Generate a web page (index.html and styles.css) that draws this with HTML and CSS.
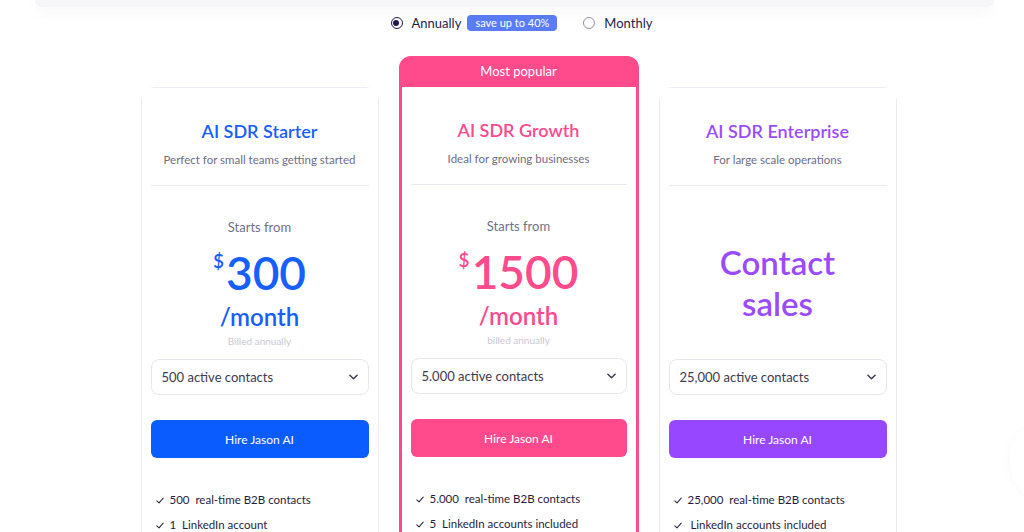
FILE: index.html
```html
<!DOCTYPE html>
<html lang="en">
<head>
<meta charset="utf-8">
<title>Pricing</title>
<link rel="stylesheet" href="styles.css">
</head>
<body>
<div class="page">
  <div class="top-panel"></div>

  <div class="toggle-row">
    <label class="opt">
      <span class="radio checked"></span>
      <span class="opt-label">Annually</span>
      <span class="badge">save up to 40%</span>
    </label>
    <label class="opt">
      <span class="radio"></span>
      <span class="opt-label">Monthly</span>
    </label>
  </div>

  <div class="plans">
    <div class="card starter">
      <div class="card-body">
        <h2 class="title">AI SDR Starter</h2>
        <p class="sub">Perfect for small teams getting started</p>
        <div class="divider"></div>
        <div class="price-area">
          <div class="starts">Starts from</div>
          <div class="amount"><span class="cur">$</span>300</div>
          <div class="per">/month</div>
          <div class="billed">Billed annually</div>
        </div>
        <div class="select"><span>500 active contacts</span><svg class="chev" viewBox="0 0 10 6" width="9" height="6"><polyline points="1,1 5,5 9,1"/></svg></div>
        <button class="cta">Hire Jason AI</button>
        <ul class="features">
          <li><svg class="check" viewBox="0 0 10 8" width="8" height="7"><polyline points="1,4.5 3.8,7 9,1"/></svg>500&nbsp; real-time B2B contacts</li>
          <li><svg class="check" viewBox="0 0 10 8" width="8" height="7"><polyline points="1,4.5 3.8,7 9,1"/></svg>1&nbsp; LinkedIn account</li>
        </ul>
      </div>
    </div>

    <div class="card growth featured">
      <div class="ribbon">Most popular</div>
      <div class="card-body">
        <h2 class="title">AI SDR Growth</h2>
        <p class="sub">Ideal for growing businesses</p>
        <div class="divider"></div>
        <div class="price-area">
          <div class="starts">Starts from</div>
          <div class="amount"><span class="cur">$</span>1500</div>
          <div class="per">/month</div>
          <div class="billed">billed annually</div>
        </div>
        <div class="select"><span>5.000 active contacts</span><svg class="chev" viewBox="0 0 10 6" width="9" height="6"><polyline points="1,1 5,5 9,1"/></svg></div>
        <button class="cta">Hire Jason AI</button>
        <ul class="features">
          <li><svg class="check" viewBox="0 0 10 8" width="8" height="7"><polyline points="1,4.5 3.8,7 9,1"/></svg>5.000&nbsp; real-time B2B contacts</li>
          <li><svg class="check" viewBox="0 0 10 8" width="8" height="7"><polyline points="1,4.5 3.8,7 9,1"/></svg>5&nbsp; LinkedIn accounts included</li>
        </ul>
      </div>
    </div>

    <div class="card enterprise">
      <div class="card-body">
        <h2 class="title">AI SDR Enterprise</h2>
        <p class="sub">For large scale operations</p>
        <div class="divider"></div>
        <div class="price-area contact">
          <div class="contact-sales">Contact<br>sales</div>
        </div>
        <div class="select"><span>25,000 active contacts</span><svg class="chev" viewBox="0 0 10 6" width="9" height="6"><polyline points="1,1 5,5 9,1"/></svg></div>
        <button class="cta">Hire Jason AI</button>
        <ul class="features">
          <li><svg class="check" viewBox="0 0 10 8" width="8" height="7"><polyline points="1,4.5 3.8,7 9,1"/></svg>25,000&nbsp; real-time B2B contacts</li>
          <li><svg class="check" viewBox="0 0 10 8" width="8" height="7"><polyline points="1,4.5 3.8,7 9,1"/></svg>&nbsp;LinkedIn accounts included</li>
        </ul>
      </div>
    </div>
  </div>

  <div class="chat-widget"></div>
</div>
</body>
</html>
```

FILE: styles.css
```css
* { box-sizing: border-box; }

html, body {
  margin: 0;
  padding: 0;
  height: 100%;
  overflow: hidden;
  background: #ffffff;
}

body {
  font-family: "Lato", "Noto Sans", sans-serif;
  color: #1f1d3d;
}

.page {
  position: relative;
  padding-left: 13px;
  height: 100%;
}

.top-panel {
  height: 7px;
  margin: 0 30px 0 22px;
  background: #f6f6f9;
  border-radius: 0 0 28px 28px;
  box-shadow: 0 4px 14px rgba(30, 30, 70, 0.05);
}

/* toggle */
.toggle-row {
  display: flex;
  justify-content: center;
  align-items: center;
  gap: 26px;
  height: 20px;
  margin-top: 6px;
  padding-left: 6px;
}

.opt {
  display: flex;
  align-items: center;
}

.radio {
  width: 12px;
  height: 12px;
  border-radius: 50%;
  border: 1.5px solid #8f8fa3;
  margin-right: 9px;
  position: relative;
}

.radio.checked {
  border-color: #1e1b4b;
}

.radio.checked::after {
  content: "";
  position: absolute;
  left: 1.5px;
  top: 1.5px;
  width: 6px;
  height: 6px;
  border-radius: 50%;
  background: #1e1b4b;
}

.opt-label {
  font-size: 13px;
  color: #1e1b4b;
}

.badge {
  margin-left: 6px;
  background: #5a7df7;
  color: #ffffff;
  font-size: 11px;
  line-height: 16px;
  height: 16px;
  padding: 0 8px;
  border-radius: 4px;
}

/* plans */
.plans {
  display: flex;
  justify-content: center;
  align-items: flex-start;
  gap: 20px;
  margin-top: 23px;
}

.card {
  width: 238px;
  margin-top: 31px;
  border: 1px solid #eaeaf2;
  border-radius: 14px;
  background: #ffffff;
}

.card.featured {
  width: 240px;
  margin-top: 0;
  border: 3px solid #ff4a8c;
  border-radius: 12px;
  background: #ff4a8c;
  overflow: hidden;
}

.ribbon {
  height: 28px;
  line-height: 24px;
  text-align: center;
  color: #ffffff;
  font-size: 13px;
}

.card-body {
  background: #ffffff;
  padding: 31px 9px 20px;
  display: flex;
  flex-direction: column;
  align-items: stretch;
}

.title {
  margin: 0;
  font-size: 18px;
  line-height: 24px;
  font-weight: 600;
  text-align: center;
}

.sub {
  margin: 9px 0 0;
  font-size: 11.5px;
  line-height: 16px;
  color: #6d6d84;
  text-align: center;
}

.divider {
  height: 1px;
  background: #e9e9f1;
  margin-top: 17px;
}

.price-area {
  height: 173px;
  display: flex;
  flex-direction: column;
  align-items: center;
  padding-top: 32px;
}

.starts {
  font-size: 13px;
  line-height: 18px;
  color: #707088;
}

.amount {
  margin-top: 13px;
  font-size: 46px;
  line-height: 48px;
  font-weight: 600;
  display: flex;
  align-items: flex-start;
}

.cur {
  font-size: 19px;
  line-height: 19px;
  margin-right: 2px;
  margin-top: 2px;
}

.per {
  margin-top: 6px;
  font-size: 24px;
  line-height: 28px;
  font-weight: 600;
}

.billed {
  margin-top: 4px;
  font-size: 10px;
  line-height: 12px;
  color: #c9c9d4;
}

.price-area.contact {
  padding-top: 56px;
}

.contact-sales {
  font-size: 33px;
  line-height: 41px;
  font-weight: 600;
  text-align: center;
}

.select {
  height: 36px;
  border: 1px solid #e6e6ef;
  border-radius: 8px;
  display: flex;
  align-items: center;
  justify-content: space-between;
  padding: 0 10px 0 10px;
  font-size: 13px;
  color: #3b3b4c;
}

.chev {
  fill: none;
  stroke: #3b3b4c;
  stroke-width: 1.6;
  stroke-linecap: round;
  stroke-linejoin: round;
}

.cta {
  margin-top: 25px;
  height: 38px;
  border: none;
  border-radius: 6px;
  color: #ffffff;
  font-family: inherit;
  font-size: 12px;
  cursor: pointer;
}

.features {
  list-style: none;
  margin: 33px 0 0;
  padding: 0 0 0 5px;
}

.features li {
  display: flex;
  align-items: center;
  font-size: 11.5px;
  line-height: 18px;
  height: 18px;
  color: #1f1d3d;
  margin-bottom: 7px;
}

.check {
  fill: none;
  stroke: #2a2845;
  stroke-width: 1.3;
  stroke-linecap: round;
  stroke-linejoin: round;
  margin-right: 6px;
}

/* themes */
.starter .title, .starter .amount, .starter .per { color: #1760ff; }
.starter .cta { background: #0b5cff; }

.growth .title, .growth .amount, .growth .per { color: #ff4a8c; }
.growth .cta { background: #ff4a8c; }

.enterprise .title, .enterprise .contact-sales { color: #9a4cfb; }
.enterprise .cta { background: #9747ff; }

.chat-widget {
  position: absolute;
  left: 1010px;
  top: 415px;
  width: 92px;
  height: 92px;
  border-radius: 50%;
  background: #ffffff;
  box-shadow: 0 0 14px rgba(40, 40, 80, 0.025);
}
```
